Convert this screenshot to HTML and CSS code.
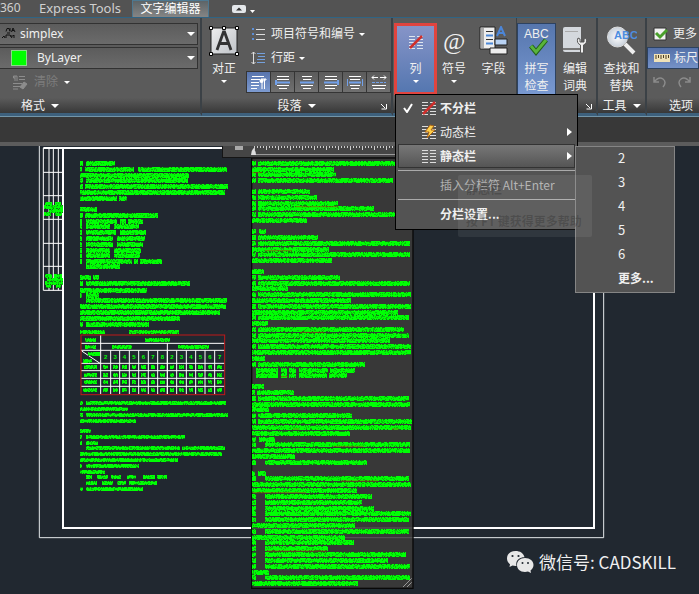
FILE: index.html
```html
<!DOCTYPE html>
<html lang="zh-CN">
<head>
<meta charset="utf-8">
<title>文字编辑器</title>
<link rel="stylesheet" href="styles.css">
</head>
<body>
<nav class="tabs">
  <a class="tab tab-cut" href="#">360</a>
  <a class="tab tab-express" href="#">Express Tools</a>
  <a class="tab tab-on" href="#">文字编辑器</a>
  <button class="collapse" aria-label="最小化"><svg width="24" height="10" viewBox="0 0 24 10"><rect width="14" height="8" y="1" rx="2" fill="#e4e7ea"/><path d="M4 6.500l3-3 3 3z" fill="#333"/><path d="M18 6h5l-2.500 3z" fill="#fff"/></svg></button>
</nav>

<header class="ribbon">
  <section class="panel p-format">
    <div class="body stack">
      <div class="combo">
        <svg class="combo-icon" width="14" height="14" viewBox="0 0 14 14" fill="none" stroke="#111"><path d="M4 4.500l1-3h2l1 3M8 1v3M9.500 5l1.500-4 2 4M10 3.500h2M0 11l2-2 1 2M4 11V8h4l2 3M8 9h3l1-1v3M5 6h3"/></svg>
        <select aria-label="文字样式"><option>simplex</option></select><i class="tri big"></i>
      </div>
      <div class="combo layer">
        <span class="swatch"></span>
        <select aria-label="颜色"><option>ByLayer</option></select><i class="tri big"></i>
      </div>
      <button class="row clear" disabled><svg width="16" height="15" viewBox="0 0 16 15" fill="none" stroke="#8d8d8d"><path d="M3 1v5M5 1v5M5 1H1.500v2H3M7 1.500h6M7 4.500h6M1 8.500h9M1 11.500h7M1 14h5"/><path d="M8 12l4-5 3 2-4 5z" fill="#8d8d8d"/></svg><span>清除</span><i class="tri"></i></button>
    </div>
    <h2 class="title"><span>格式</span><i class="tri big"></i></h2>
  </section>

  <section class="panel p-para">
    <div class="body">
      <button class="tool justify"><svg width="30" height="30" viewBox="0 0 30 30"><defs><linearGradient id="pg" x2="1" y2="1"><stop stop-color="#eee"/><stop offset="1" stop-color="#bfc3c8"/></linearGradient></defs><rect x="2" y="2" width="26" height="26" fill="url(#pg)" stroke="#222"/><path d="M8 24l6.500-18h1L22 24M10.500 17.500h9" fill="none" stroke="#333" stroke-width="2.800"/><path d="M.5.5h3v3h-3zM13.500.5h3v3h-3zM26.500.5h3v3h-3zM.5 26.500h3v3h-3zM26.500 26.500h3v3h-3z" fill="#fff" stroke="#000"/></svg><span>对正</span><i class="tri"></i></button>
      <div class="para-rows">
        <button class="row"><svg width="16" height="14" viewBox="0 0 16 14"><path d="M5 2.500h9M5 7.500h9M5 12.500h9" stroke="#ddd"/><path d="M1 1h2v2H1zM1 6h2v2H1zM1 11h2v2H1z" fill="#5b8ed6"/></svg><span>项目符号和编号</span><i class="tri"></i></button>
        <button class="row"><svg width="16" height="14" viewBox="0 0 16 14" fill="none"><path d="M2.500 1v12M.5 3l2-2 2 2M.5 11l2 2 2-2" stroke="#ddd"/><path d="M6 2.500h8M7 5.500h7M6 8.500h8M6 11.500h8" stroke="#74a0dc"/></svg><span>行距</span><i class="tri"></i></button>
        <div class="aligns">
          <button class="on" aria-label="默认"><svg width="18" height="16" viewBox="0 0 18 16"><path d="M2 2.500h12M1 5.500h9M1 8.500h8M1 11.500h8M1 14.500h6" stroke="#fff"/><path d="M12 5v10M14.500 5v10M11 5h5v1h-5" stroke="#fff" fill="none"/><circle cx="11.500" cy="7" r="2" fill="#fff"/></svg></button>
          <button aria-label="左对齐"><svg width="18" height="16" viewBox="0 0 18 16"><path d="M3 2.500h12M3 5.500h12M3 11.500h12M5 14.500h8" stroke="#fff"/><path d="M1 8.500h15M2 6v5" stroke="#72a0e8" stroke-width="2"/></svg></button>
          <button aria-label="居中"><svg width="18" height="16" viewBox="0 0 18 16"><path d="M4 2.500h10M5 5.500h8M3 11.500h12M5 14.500h8" stroke="#fff"/><path d="M2 8.500h14" stroke="#72a0e8" stroke-width="2"/></svg></button>
          <button aria-label="右对齐"><svg width="18" height="16" viewBox="0 0 18 16"><path d="M3 2.500h12M3 5.500h12M3 11.500h12M3 14.500h10" stroke="#fff"/><path d="M2 8.500h15M16 6v5" stroke="#72a0e8" stroke-width="2"/></svg></button>
          <button aria-label="对正"><svg width="18" height="16" viewBox="0 0 18 16"><path d="M3 2.500h12M4 5.500h10M4 11.500h10M5 14.500h8" stroke="#fff"/><path d="M3 8.500h12" stroke="#72a0e8" stroke-width="2"/><path d="M1.500 5v7M16.500 5v7" stroke="#72a0e8"/></svg></button>
          <button aria-label="分散对齐"><svg width="18" height="16" viewBox="0 0 18 16"><path d="M2 3.500h6M10 3.500h6M4 1.500l-2 2 2 2M14 1.500l2 2-2 2M2 11.500h14M3 14.500h12" stroke="#fff" fill="none"/><path d="M2 8.500h14" stroke="#72a0e8" stroke-dasharray="3 1"/></svg></button>
        </div>
      </div>
    </div>
    <h2 class="title"><span>段落</span><i class="tri big"></i><svg class="launch" width="8" height="8" viewBox="0 0 8 8"><path d="M1 2l4 4M6.500 2v5h-5" fill="none" stroke="#fff"/></svg></h2>
  </section>

  <section class="panel p-insert">
    <div class="body">
      <button class="tool columns"><svg width="16" height="16" viewBox="0 0 16 16"><path d="M1 2.500h6M1 5.500h6M1 8.500h6M1 11.500h6M1 14.500h6M9 2.500h6M9 5.500h6M9 8.500h6M9 11.500h6M9 14.500h6" stroke="#dfe6f0"/><path d="M2 14L14 2" stroke="#cf2f2c" stroke-width="2.500"/></svg><span>列</span><i class="tri"></i></button>
      <button class="tool symbol"><b class="at">@</b><span>符号</span><i class="tri"></i></button>
      <button class="tool field"><svg width="30" height="30" viewBox="0 0 30 30"><path d="M1 1h15v22H1z" fill="#eee" stroke="#222"/><path d="M2 2h3v20H2z" fill="#aaa"/><path d="M7 5.500h7M7 13.500h7" stroke="#333"/><path d="M7 9.500h7M7 17.500h7" stroke="#4b88d8" stroke-width="2"/><path d="M18 10l4-9 4 9M19.500 7h5" fill="none" stroke="#4c86d8" stroke-width="2"/><path d="M16 13h12v6H16z" fill="#b9d3f4" stroke="#222"/><path d="M11 22h17v6H11z" fill="#eee" stroke="#222"/></svg><span>字段</span></button>
    </div>
    <div class="title"></div>
  </section>

  <section class="panel p-spell">
    <div class="body">
      <button class="tool check"><svg width="30" height="30" viewBox="0 0 30 30"><path d="M9 20l5 6 10-12" fill="none" stroke="#235f18" stroke-width="5"/><path d="M9 20l5 6 10-12" fill="none" stroke="#59b43b" stroke-width="3"/><text x="2" y="12" class="abc" fill="#eee">ABC</text></svg><span>拼写<br>检查</span></button>
      <button class="tool dict"><svg width="28" height="30" viewBox="0 0 28 30"><path d="M2 3q0-2 2-2h16v25H4q-2 0-2-2z" fill="#d4d8dd"/><path d="M2 22h18v2H2z" fill="#777"/><path d="M4 5h13v1H4z" fill="#aaa"/><path d="M17 12q-2 5 2.500 7v8h3v-8q4.500-2 2.500-7l-2 1v3h-4v-3z" fill="#eee" stroke="#555"/></svg><span>编辑<br>词典</span></button>
    </div>
    <h2 class="title"><svg class="launch" width="8" height="8" viewBox="0 0 8 8"><path d="M1 2l4 4M6.500 2v5h-5" fill="none" stroke="#fff"/></svg></h2>
  </section>

  <section class="panel p-tools">
    <div class="body">
      <button class="tool find"><svg width="30" height="30" viewBox="0 0 30 30"><defs><radialGradient id="lens"><stop stop-color="#fff"/><stop offset="1" stop-color="#c8d0da"/></radialGradient></defs><path d="M18 18l9 9" stroke="#eee" stroke-width="4"/><circle cx="10.500" cy="11" r="10" fill="url(#lens)" stroke="#ddd"/><text x="7" y="13" class="abc small" fill="#4d8de0">ABC</text></svg><span>查找和<br>替换</span></button>
    </div>
    <h2 class="title"><span>工具</span><i class="tri big"></i></h2>
  </section>

  <section class="panel p-options">
    <div class="body stack">
      <button class="row"><svg width="16" height="14" viewBox="0 0 16 14"><path d="M1 1h12v12H1z" fill="#f2f2f2" stroke="#333"/><path d="M3 6l4 4 7-7" fill="none" stroke="#4aa02c" stroke-width="3"/></svg><span>更多</span></button>
      <button class="row ruler-btn"><svg width="16" height="8" viewBox="0 0 16 8"><path d="M0 0h16v8H0z" fill="#efe2b8"/><path d="M2 1v4M4.500 1v3M7 1v4M9.500 1v3M12 1v4M14.500 1v3" stroke="#4d3d20"/></svg><span>标尺</span></button>
      <div class="row undo"><svg width="38" height="12" viewBox="0 0 38 12" fill="none" stroke="#8b8b8b" stroke-width="1.500"><path d="M1 1v5h5M1 6q5-6 9-3t0 8M37 1v5h-5M37 6q-5-6-9-3t0 8"/></svg></div>
    </div>
    <h2 class="title"><span>选项</span></h2>
  </section>
</header>
<div class="gap-bar"></div>

<main class="canvas">
  <svg id="drawing" class="drawing" viewBox="0 438 2097 1344" preserveAspectRatio="xMinYMin slice" role="img" aria-label="设计说明图纸"></svg>
  <div class="ruler"></div>
  <p class="wechat"><svg width="28" height="24" viewBox="0 0 28 24"><path d="M9.500 1C4 1 1 4.500 1 8.500c0 2.500 1.200 4.300 3 5.700L3.500 17l3-1.500 3 .5h1C9 10 14 7 18.500 7.200 17.500 3 14 1 9.500 1z" fill="#e8e8e8"/><path d="M19 8c-5 0-8 3-8 7s3 7 8 7l3-.5 3 1.500-.5-2.500c1.500-1.200 3-3 3-5.500 0-4-3.500-7-8.500-7z" fill="#e8e8e8"/><g fill="#212830"><circle cx="6.500" cy="6" r="1.100"/><circle cx="12.500" cy="6" r="1.100"/><circle cx="16.500" cy="13" r="1"/><circle cx="22" cy="13" r="1"/></g></svg><span>微信号: CADSKILL</span></p>
</main>

<div class="menu" role="menu">
  <button role="menuitem" class="item strong"><svg class="tick" width="10" height="10" viewBox="0 0 10 10"><path d="M1 5l3 4 5-8" fill="none" stroke="#fff" stroke-width="2"/></svg><svg class="cols" width="16" height="16" viewBox="0 0 16 16"><path d="M1 2.500h6M1 5.500h6M1 8.500h6M1 11.500h6M1 14.500h6M9 2.500h6M9 5.500h6M9 8.500h6M9 11.500h6M9 14.500h6" stroke="#ddd"/><path d="M2 14L14 2" stroke="#cf2f2c" stroke-width="2.500"/></svg><span>不分栏</span></button>
  <button role="menuitem" class="item"><svg class="cols" width="16" height="16" viewBox="0 0 16 16"><path d="M1 2.500h6M1 5.500h6M1 8.500h6M1 11.500h6M1 14.500h6M9 2.500h6M9 5.500h6M9 8.500h6M9 11.500h6M9 14.500h6" stroke="#ddd"/><path d="M9 1L4 8h4l-2 6 8-8h-4l3-4z" fill="#ffcf4a" stroke="#a8641a"/></svg><span>动态栏</span><i class="more"></i></button>
  <button role="menuitem" class="item strong hover"><svg class="cols" width="16" height="16" viewBox="0 0 16 16"><path d="M1 2.500h6M1 5.500h6M1 8.500h6M1 11.500h6M1 14.500h6M9 2.500h6M9 5.500h6M9 8.500h6M9 11.500h6M9 14.500h6" stroke="#ddd"/></svg><span>静态栏</span><i class="more"></i></button>
  <hr>
  <button role="menuitem" class="item" disabled><span>插入分栏符 Alt+Enter</span></button>
  <hr>
  <button role="menuitem" class="item strong"><span>分栏设置...</span></button>
</div>
<div class="submenu" role="menu">
  <button role="menuitem">2</button><button role="menuitem">3</button><button role="menuitem">4</button><button role="menuitem">5</button><button role="menuitem">6</button><button role="menuitem" class="strong">更多...</button>
</div>
<div class="hint"><b>静态栏</b><b>按 F1 键获得更多帮助</b></div>
<script src="drawing.js"></script>
</body>
</html>
```
FILE: styles.css
```css
* { box-sizing: border-box; }
body {
  margin: 0;
  min-height: 100vh;
  display: flex;
  flex-direction: column;
  position: relative;
  overflow: hidden;
  background: #212830;
  color: #f0f0f0;
  font: 12px/16px "Noto Sans", "Noto Sans CJK SC", sans-serif;
}
button, select {
  font: inherit;
  color: inherit;
  background: none;
  border: 0;
  padding: 0;
  margin: 0;
}
svg { display: block; flex: none; }
.tri {
  flex: none;
  border: 3px solid transparent;
  border-top-color: #fff;
  border-bottom: 0;
}
.tri.big { border-width: 4px; border-bottom: 0; }

/* tabs */
.tabs { display: flex; height: 17px; background: #535353; align-items: stretch; }
.tab { color: #d0d0d0; text-decoration: none; white-space: nowrap; }
.tab-cut { width: 39px; }
.tab-express { width: 93px; font-size: 13px; }
.tab-on {
  width: 77px;
  text-align: center;
  color: #fff;
  border: 1px solid #4d7890;
  border-bottom: 0;
  background: linear-gradient(#5d6467, #858585);
}
.collapse { margin-left: 23px; }

/* ribbon */
.ribbon {
  display: flex;
  height: 100px;
  background: #5b5b5b;
  border-top: 1px solid #2f6484;
  border-bottom: 1px solid #7395a8;
  overflow: hidden;
}
.panel {
  flex: none;
  display: flex;
  flex-direction: column;
  border-right: 2px solid #3b4146;
  border-bottom: 3px solid #3d607c;
}
.p-format { width: 202px; }
.p-para { width: 191px; }
.p-insert { width: 124px; border-right-width: 1px; }
.p-spell { width: 81px; }
.p-tools { width: 49px; }
.p-options { flex: 1; border-right: 0; min-width: 0; }
.body { flex: 1; display: flex; padding-top: 5px; min-height: 0; }
.stack { flex-direction: column; gap: 2px; }
.title {
  flex: none;
  margin: 0;
  height: 15px;
  display: flex;
  align-items: center;
  justify-content: center;
  gap: 6px;
  position: relative;
  font-size: 12px;
  font-weight: 400;
  background: linear-gradient(#5b5b5b, #383838);
}
.launch { position: absolute; right: 3px; top: 4px; }
.p-format .title { padding-right: 120px; }
.p-options .title { padding-left: 16px; }

.combo {
  display: flex;
  align-items: center;
  position: relative;
  height: 22px;
  margin-right: 2px;
  border: 1px solid #323232;
  border-left: 0;
  background: linear-gradient(#5c5c5c, #6b6b6b);
}
.combo-icon { position: absolute; left: 2px; }
.combo select { flex: 1; height: 20px; padding-left: 20px; appearance: none; font-size: 12px; }
.combo.layer select { padding-left: 37px; }
.combo .tri { position: absolute; right: 2px; pointer-events: none; }
.swatch { position: absolute; left: 11px; width: 16px; height: 16px; background: #0f0; border: 1px solid #8d8; }
.row { display: flex; align-items: center; gap: 4px; height: 22px; white-space: nowrap; }
.clear { padding-left: 12px; gap: 6px; color: #7d7d7d; }

.tool { display: flex; flex-direction: column; align-items: center; line-height: 17px; padding-top: 3px; flex: none; }
.tool svg { margin-bottom: 4px; }
.tool .tri { margin-top: 3px; }
.justify { width: 44px; }
.para-rows { display: flex; flex-direction: column; gap: 2px; }
.para-rows .row { padding-left: 5px; }
.aligns { display: flex; border: 1px solid #353535; height: 22px; background: #353535; gap: 1px; }
.aligns button { width: 23px; display: grid; place-items: center; background: linear-gradient(#5b5b5b, #707070); }
.aligns .on { background: linear-gradient(#5874ad, #7d9bd0); }

.p-insert .body { padding-left: 1px; }
.columns {
  width: 43px;
  height: 72px;
  padding-top: 8px;
  border: 3px solid #e0443f;
  background: linear-gradient(#8694c8, #5577b0);
}
.columns svg { margin-bottom: 10px; }
.symbol { width: 34px; }
.at { height: 34px; font: italic 400 24px/30px "Liberation Serif", serif; }
.field { width: 45px; }
.check { width: 39px; height: 72px; padding-top: 2px; border: 1px solid #2d4260; background: linear-gradient(#5676ad, #7898d0); }
.dict { width: 38px; }
.find { width: 47px; }
.abc { font: 12px "Liberation Sans", sans-serif; }
.abc.small { font-size: 11px; font-weight: 700; }
.p-options .row { padding-left: 6px; }
.ruler-btn { background: linear-gradient(#5470a8, #7592c8); border: 1px solid #2d4260; }

.gap-bar { height: 29px; background: #383838; border-bottom: 4px solid #5c5c5c; }

/* drawing area */
.canvas { flex: 1; position: relative; min-height: 0; }
.drawing { position: absolute; inset: 0; width: 100%; height: 100%; }
.mtext { font: 700 18px "Liberation Sans", sans-serif; fill: #0f0; }
.ruler {
  position: absolute;
  left: 222px;
  top: 0;
  width: 191px;
  height: 12px;
  border: 1px solid #151515;
  border-top: 0;
  background: #454545;
}
.wechat {
  position: absolute;
  right: 23px;
  bottom: 20px;
  margin: 0;
  display: flex;
  align-items: center;
  gap: 5px;
  font: 17px/24px "Noto Sans CJK SC", sans-serif;
}

/* menus */
.menu {
  position: absolute;
  left: 395px;
  top: 94px;
  width: 183px;
  padding: 1px 2px 3px;
  border: 1px solid #000;
  background: #535353;
}
.item {
  display: flex;
  align-items: center;
  position: relative;
  width: 100%;
  height: 24px;
  padding-left: 42px;
  font-family: "Noto Sans CJK SC", sans-serif;
}
.item:disabled { color: #b0b0b0; }
.strong { font-weight: 700; }
.hover { background: linear-gradient(#777, #555); border: 1px solid #333; padding-left: 41px; }
.tick { position: absolute; left: 5px; }
.cols { position: absolute; left: 23px; }
.hover .cols { left: 22px; }
.more { position: absolute; right: 3px; border: 4px solid transparent; border-left: 5px solid #fff; border-right: 0; }
.hover .more { right: 2px; }
.menu hr { height: 1px; margin: 2px 0; border: 0; background: #aaa; }
.submenu {
  position: absolute;
  left: 575px;
  top: 146px;
  width: 100px;
  padding-bottom: 1px;
  border: 1px solid #858585;
  background: #535353;
  display: grid;
}
.submenu button { height: 24px; padding: 0 0 2px 42px; text-align: left; font-family: "Noto Sans CJK SC", sans-serif; font-size: 13px; }
.submenu .strong { font-size: 12px; }
.hint {
  position: absolute;
  left: 458px;
  top: 175px;
  width: 134px;
  padding: 7px 8px;
  display: grid;
  gap: 16px;
  border-radius: 2px;
  background: #ffffff12;
  color: #00000030;
  font-size: 12px;
  line-height: 16px;
  white-space: nowrap;
  pointer-events: none;
}
```
FILE: drawing.js
```js
// Drawing units are three to a screen pixel.
const NS = 'http://www.w3.org/2000/svg';
const svg = document.getElementById('drawing');
let seed = 7;
const rnd = () => (seed = (seed * 16807) % 2147483647) / 2147483647;
const snap = v => Math.round(v / 3) * 3;

function add(tag, attrs, text) {
  const el = document.createElementNS(NS, tag);
  for (const k in attrs) el.setAttribute(k, attrs[k]);
  if (text) el.textContent = text;
  svg.appendChild(el);
}
const lines = (d, stroke, width) => add('path', { d, stroke, 'stroke-width': width, fill: 'none' });

// Lines of note text seen from far away: bright strips speckled on their edges.
function strips(ox, oy, rows, height) {
  let ink = '', dark = '', faint = '';
  for (const [y, ...xs] of rows) {
    const top = snap(oy + y - height / 2);
    for (let i = 0; i < xs.length; i += 2) {
      const from = snap(ox + xs[i]), to = snap(ox + xs[i + 1]);
      ink += `M${from} ${top}h${to - from}v${height}h${from - to}z`;
      for (let x = from; x < to; x += 3) {
        if (rnd() < 0.4) dark += `M${x} ${top}h3v3h-3z`;
        if (rnd() < 0.3) dark += `M${x} ${top + height - 3}h3v3h-3z`;
        for (let p = 3; p < height - 3; p += 3) if (rnd() < 0.16) faint += `M${x} ${top + p}h3v3h-3z`;
      }
    }
  }
  add('path', { d: ink, fill: '#00ff04' });
  add('path', { d: dark, fill: '#1c3f20', opacity: 0.7 });
  add('path', { d: faint, fill: '#1c3f20', opacity: 0.35 });
}

// sheet frames
lines('M118 438V1613H1811V438', '#e4e8ea', 3);
lines('M130 444H1782V1584H189V444', '#fff', 6);
// side title block
lines('M130 444V871H189M147 444V871M160 444V871M175 444V871M130 517H189M130 587H189M130 658H189M130 730H189M130 799H189', '#fff', 3);
strips(90, 420, [[192, 46, 66, 76, 92], [202, 42, 98], [213, 56, 98], [222, 42, 64, 76, 96], [407, 44, 66, 72, 96], [419, 50, 98], [430, 44, 98], [438, 48, 64, 78, 94]], 12);

// left column of notes
strips(90, 420, [
  [71, 150, 158, 168, 254], [88, 150, 156, 166, 312, 324, 592], [106, 150, 476], [122, 150, 158, 167, 474],
  [140, 150, 160, 166, 594], [157, 150, 586], [176, 150, 262, 268, 292], [208, 150, 200],
  [225, 150, 158, 166, 385], [243, 150, 157, 167, 260, 270, 288, 294, 340], [260, 150, 157, 167, 240, 252, 327],
  [276, 150, 157, 167, 258, 270, 348], [294, 150, 157, 167, 250, 261, 346], [312, 150, 157, 167, 248, 260, 340],
  [330, 150, 157, 167, 240, 252, 332], [345, 150, 157, 167, 240, 252, 330], [363, 150, 157, 167, 305, 312, 325, 331, 395],
  [380, 169, 270], [412, 150, 182, 188, 206], [431, 150, 158, 168, 480], [450, 150, 352], [465, 150, 157, 167, 206],
  [482, 169, 592], [499, 150, 587], [517, 150, 569], [535, 150, 449], [552, 150, 158, 167, 356]
], 15);
strips(90, 960, [
  [36, 150, 226, 297, 446], [248, 150, 158, 167, 587], [266, 150, 294], [284, 150, 158, 167, 594], [302, 150, 317],
  [334, 150, 182], [351, 150, 157, 167, 464], [368, 150, 157, 167, 203], [385, 169, 450, 456, 585], [403, 150, 576],
  [421, 150, 444], [438, 150, 157, 167, 328], [455, 150, 226], [471, 169, 186, 201, 235, 243, 274, 290, 318, 338, 374, 382, 412],
  [489, 169, 200, 216, 250, 260, 288, 297, 380], [507, 150, 158, 167, 340]
], 12);

// cable table
lines('M302 1005V1182M502 1030V1182M243 1030H674M243 1051H674M243 1090H674M243 1112H674M243 1135H674M243 1159H674M245 1053L300 1090', '#fff', 3);
const cols = [302, 332, 359, 388, 416, 445, 473, 502, 530, 559, 587, 615, 644, 674];
lines(cols.slice(1, -1).map(x => `M${x} 1051V1182`).join(''), '#fff', 3);
add('rect', { x: 243, y: 1005, width: 431, height: 179, fill: 'none', stroke: '#c01818', 'stroke-width': 3 });
strips(90, 960, [[59, 165, 198, 344, 420], [81, 165, 198, 246, 306, 444, 536], [102, 174, 210], [122, 158, 186], [141, 162, 200], [164, 162, 200], [187, 162, 200], [209, 160, 200]], 12);
[2, 3, 4, 5, 6, 7, 8, 2, 3, 4, 5, 6, 7].forEach((n, i) => {
  const mid = (cols[i] + cols[i + 1]) / 2;
  add('text', { x: mid, y: 1078, class: 'mtext', 'text-anchor': 'middle' }, String(n));
  strips(mid - 7, 960, [[141, 0, 14], [164, 0, 14], [187, 0, 14], [209, 0, 14]], 12);
});

// multiline text editor
add('rect', { x: 755, y: 474, width: 484, height: 1291, fill: '#383838', stroke: '#080808', 'stroke-width': 4 });
lines('M757 1584H1237M757 1613H1237', '#6d6d6d', 2);
strips(720, 420, [
  [70, 36, 48, 54, 500], [87, 36, 282], [103, 36, 48, 54, 288], [121, 36, 48, 54, 459], [155, 36, 48, 54, 210],
  [172, 36, 48, 54, 230], [190, 36, 48, 54, 294], [206, 36, 48, 54, 402], [224, 36, 48, 54, 500], [241, 36, 201],
  [274, 36, 48, 56, 78], [291, 36, 48, 54, 233], [309, 36, 48, 54, 510], [327, 36, 267], [344, 36, 48, 54, 510],
  [361, 36, 276], [394, 36, 72], [411, 36, 48, 54, 301], [429, 36, 48, 54, 511], [446, 36, 145], [464, 36, 48, 54, 513],
  [481, 36, 334], [499, 36, 48, 54, 513], [516, 36, 474], [533, 36, 48, 54, 507], [551, 36, 84], [568, 36, 48, 54, 492],
  [585, 36, 48, 54, 508], [602, 36, 450], [620, 36, 48, 54, 512], [637, 36, 514]
], 15);
strips(720, 1050, [
  [25, 36, 76], [42, 36, 48, 54, 374], [60, 49, 115, 123, 142, 148, 168, 177, 264, 269, 344], [77, 49, 115, 123, 142, 148, 168, 177, 262, 267, 320],
  [110, 36, 72], [128, 36, 46, 52, 162], [145, 36, 48, 54, 508], [162, 36, 510], [179, 36, 87], [197, 36, 48, 54, 337],
  [214, 36, 48, 54, 516], [232, 36, 514], [249, 36, 330], [267, 36, 48, 57, 104], [284, 36, 48, 75, 510],
  [301, 36, 510], [320, 36, 165], [336, 36, 48, 75, 381], [369, 36, 46, 54, 78], [386, 36, 48, 75, 508],
  [404, 36, 514], [422, 36, 350], [439, 36, 48, 75, 396], [456, 36, 48, 75, 366], [474, 36, 48, 75, 402],
  [491, 36, 48, 75, 513], [508, 36, 48, 75, 508], [526, 36, 344], [544, 36, 48, 75, 508], [561, 36, 315],
  [578, 36, 48, 75, 341], [595, 36, 48, 75, 263], [613, 36, 48, 75, 497], [631, 36, 48, 75, 444],
  [649, 36, 48, 75, 509], [666, 36, 87], [683, 36, 48, 75, 510], [701, 36, 354]
], 15);
lines('M757 518H786M886 620H1014M795 752H876M900 997H972M842 1130H865M880 1287H898M1176 1287H1196M1000 1339H1090M1024 1443H1134M757 1478H918M800 1653H980', '#96500f', 2);
lines('M1209 1761l26-26M1221 1761l14-14', '#999', 3);

// ruler ticks along the top of the editor
const host = document.querySelector('.ruler');
const ticks = document.createElementNS(NS, 'svg');
ticks.setAttribute('width', '190');
ticks.setAttribute('height', '12');
let d = '';
for (let x = 31; x < 190; x += 3) d += `M${x + 0.5} 0v${(x - 31) % 12 ? 2 : 4}`;
ticks.innerHTML = `<path d="M12 0h8v4h-8z" fill="#aaa"/><path d="M31 8.500H190" stroke="#999"/><path d="${d}" stroke="#ccc"/><path d="M28 9q0-4 2.500-7 2.500 3 2.500 7z" fill="#ddd"/>`;
host.appendChild(ticks);
```
